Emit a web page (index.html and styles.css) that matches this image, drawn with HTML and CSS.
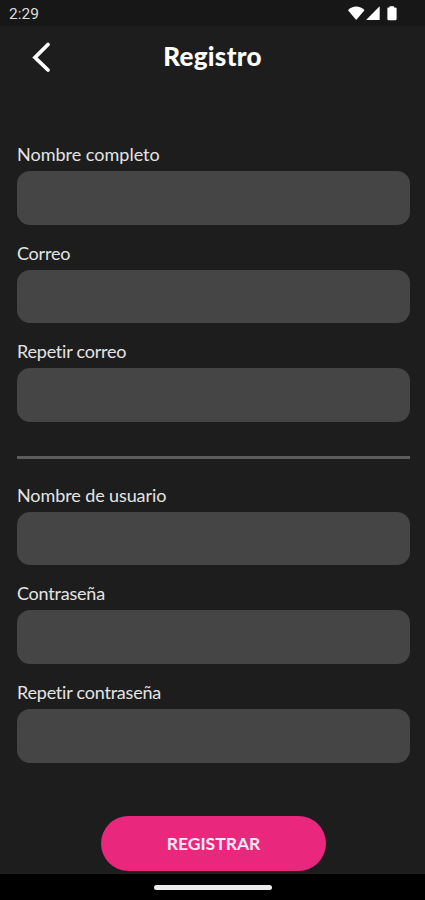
FILE: index.html
```html
<!DOCTYPE html>
<html lang="es">
<head>
<meta charset="utf-8">
<title>Registro</title>
<link rel="stylesheet" href="styles.css">
</head>
<body>
<div class="screen">
  <div class="status-bar">
    <span class="clock">2:29</span>
    <svg class="status-icons" width="50" height="16" viewBox="0 0 50 16" fill="#fff">
      <path d="M0 4.200C4.500-.6 12-.6 16.500 4.200L8.200 14z"/>
      <path d="M31.700 .2V14H18z"/>
      <path d="M40 1.500H41.500V.2H46V1.500H47.500Q48.600 1.500 48.600 2.600V13Q48.600 14.300 47.300 14.300H40.700Q39.400 14.300 39.400 13V2.600Q39.400 1.500 40 1.500z"/>
    </svg>
  </div>
  <header class="header">
    <button class="back" type="button" aria-label="Volver">
      <svg width="20" height="32" viewBox="0 0 20 32" fill="none" stroke="#fff" stroke-width="3.8" stroke-linecap="round"><path d="M17 3.500L4 16.500L17 29"/></svg>
    </button>
    <h1 class="title">Registro</h1>
  </header>
  <form class="form">
    <label class="field"><span class="label">Nombre completo</span><input class="input" type="text"></label>
    <label class="field"><span class="label label-snug">Correo</span><input class="input" type="email"></label>
    <label class="field"><span class="label label-snug">Repetir correo</span><input class="input" type="email"></label>
    <hr class="divider">
    <label class="field"><span class="label label-wide">Nombre de usuario</span><input class="input" type="text"></label>
    <label class="field"><span class="label label-snug">Contraseña</span><input class="input" type="password"></label>
    <label class="field"><span class="label label-snug">Repetir contraseña</span><input class="input" type="password"></label>
    <button class="submit" type="button"><span>REGISTRAR</span></button>
  </form>
  <div class="nav-bar"><div class="handle"></div></div>
</div>
</body>
</html>
```
FILE: styles.css
```css
* { box-sizing: border-box; }
body { margin: 0; background: #1d1d1d; color: #e4e4e4; font-family: Lato, sans-serif; font-variant-ligatures: none; }
.screen { display: flex; flex-direction: column; height: 900px; overflow: hidden; }
.status-bar { display: flex; justify-content: space-between; height: 26px; padding: 6px 27px 0 9px; background: #171717; }
.clock { font: 15.500px/17px Roboto, sans-serif; color: #dedede; }
.header { display: grid; grid-template-columns: 60px 1fr 60px; align-items: center; height: 62px; }
.back { display: flex; width: 20px; margin-left: 31px; padding: 0; border: 0; background: none; }
.title { margin: 0; padding-bottom: 3px; text-align: center; font-size: 26px; line-height: 30px; font-weight: 900; letter-spacing: .3px; color: #fff; }
.form { display: flex; flex-direction: column; flex: 1; padding: 54px 15.500px 0 17px; }
.field { display: flex; flex-direction: column; height: 98.700px; }
.label { height: 29px; font-size: 18px; line-height: 25px; }
.label-snug { letter-spacing: -.22px; }
.label-wide { letter-spacing: -.1px; }
.input { width: 100%; height: 53.500px; padding: 0 14px; border: 0; border-radius: 13px; outline: 0; background: #454545; color: #fff; font: 18px Lato, sans-serif; }
.divider { width: 100%; height: 3px; margin: 18px 0 23.700px; border: 0; background: #5c5c5c; }
.submit { display: flex; align-items: center; justify-content: center; width: 225px; height: 55.500px; margin: 37px 0 0 84px; padding: 0; border: 0; border-radius: 28px; background: #e8277d; color: #ffe9f5; font: bold 17.500px Lato, sans-serif; }
.nav-bar { display: flex; justify-content: center; height: 26px; padding-top: 10.500px; background: #000; }
.handle { width: 118px; height: 5px; border-radius: 3px; background: #ececec; }
```
